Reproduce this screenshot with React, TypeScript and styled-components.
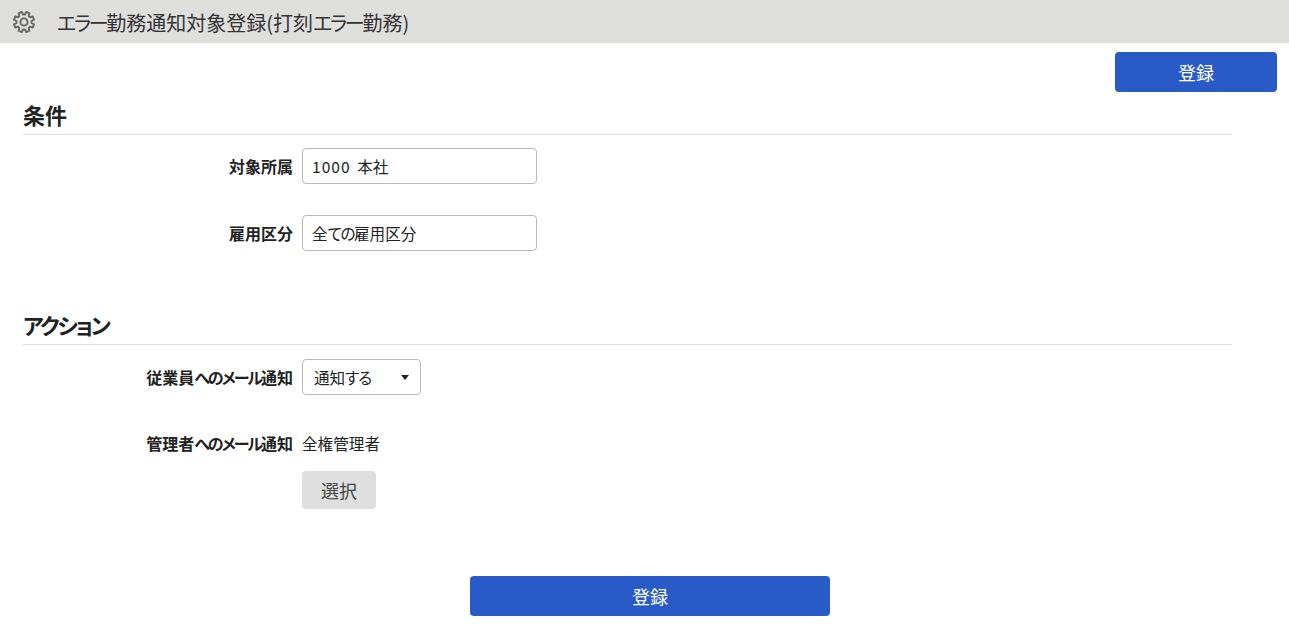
import React from 'react';
import styled, { createGlobalStyle } from 'styled-components';

const GlobalStyle = createGlobalStyle`
  html, body {
    margin: 0;
    padding: 0;
    background: #fff;
  }
  body {
    font-family: "Noto Sans CJK JP", "Noto Sans", sans-serif;
    font-size: 16px;
    font-feature-settings: "palt";
    color: #222;
  }
`;

const Header = styled.header`
  height: 43px;
  background-color: #dfdfde;
  display: flex;
  align-items: center;
  padding-left: 12px;
  color: #666;
`;

const Title = styled.h1`
  margin: 3px 0 0 21px;
  font-size: 20px;
  font-weight: 400;
  line-height: 1;
  color: #333;
`;

// the kana in the original font run much narrower than in Noto
const Kana = styled.span<{ $tight: number }>`
  letter-spacing: ${(p) => p.$tight}px;
`;

const Digits = styled.span`
  letter-spacing: 1px;
  margin-right: 6.5px;
`;

const TopBar = styled.div`
  display: flex;
  justify-content: flex-end;
  padding: 9px 12px 0 0;
`;

const SubmitButton = styled.button<{ $width: number }>`
  width: ${(p) => p.$width}px;
  height: 40px;
  padding: 0;
  border: 0;
  border-radius: 4px;
  background-color: #295bc8;
  color: #fff;
  font-family: inherit;
  font-size: 18px;
  font-feature-settings: inherit;
`;

const Section = styled.section`
  width: 1209px;
  margin-left: 23px;
`;

const SectionTitle = styled.h2<{ $top: number }>`
  margin: ${(p) => p.$top}px 0 0;
  height: 33px;
  line-height: 27px;
  font-size: 22px;
  font-weight: 700;
  color: #222;
  border-bottom: 1px solid #ddd;
`;

const Row = styled.div<{ $top: number }>`
  display: flex;
  align-items: center;
  margin-top: ${(p) => p.$top}px;
`;

const Label = styled.div`
  width: 270px;
  margin-right: 9px;
  text-align: right;
  font-size: 16px;
  line-height: 20px;
  font-weight: 700;
  color: #222;
`;

const TextBox = styled.div`
  box-sizing: border-box;
  width: 235px;
  height: 36px;
  display: flex;
  align-items: center;
  padding-left: 9px;
  border: 1px solid #b9b9b9;
  border-radius: 4px;
  font-size: 15.6px;
`;

const SelectBox = styled.div`
  box-sizing: border-box;
  width: 119px;
  height: 36px;
  display: flex;
  align-items: center;
  justify-content: space-between;
  padding: 0 11px;
  border: 1px solid #b9b9b9;
  border-radius: 4px;
  font-size: 15.6px;
`;

const Caret = styled.span`
  width: 0;
  height: 0;
  border-left: 4px solid transparent;
  border-right: 4px solid transparent;
  border-top: 5px solid #222;
`;

const Value = styled.div`
  font-size: 15.6px;
  line-height: 20px;
`;

const Indented = styled.div`
  margin: 18px 0 0 279px;
`;

const PickButton = styled.button`
  display: block;
  width: 74px;
  height: 38px;
  padding: 0;
  border: 0;
  border-radius: 4px;
  background-color: #dfdfdf;
  color: #444;
  font-family: inherit;
  font-size: 18px;
  font-feature-settings: inherit;
`;

const Footer = styled.div`
  display: flex;
  justify-content: center;
  width: 1300px;
  margin-top: 67px;
`;

// eight tooth cog outline, centred on 12,12
const cogPath = (() => {
  const pt = (r: number, deg: number) => {
    const a = (deg * Math.PI) / 180;
    return `${(12 + r * Math.cos(a)).toFixed(2)} ${(12 + r * Math.sin(a)).toFixed(2)}`;
  };
  const parts: string[] = [];
  for (let i = 0; i < 8; i++) {
    const c = i * 45 + 22.5;
    parts.push(pt(7.6, c - 15), pt(10.3, c - 10), pt(10.3, c + 10), pt(7.6, c + 15));
  }
  return `M${parts.join('L')}Z`;
})();

function CogIcon() {
  return (
    <svg width="24" height="24" viewBox="0 0 24 24" fill="none" stroke="currentColor" strokeWidth="1.9" strokeLinejoin="round">
      <path d={cogPath} />
      <circle cx="12" cy="12" r="3.6" />
    </svg>
  );
}

export default function App() {
  return (
    <>
      <GlobalStyle />
      <Header>
        <CogIcon />
        <Title>
          <Kana $tight={-2.3}>エラー</Kana>勤務通知対象登録(打刻
          <Kana $tight={-2.3}>エラー</Kana>勤務)
        </Title>
      </Header>
      <TopBar>
        <SubmitButton $width={162}>登録</SubmitButton>
      </TopBar>
      <Section>
        <SectionTitle $top={9}>条件</SectionTitle>
        <Row $top={13}>
          <Label>対象所属</Label>
          <TextBox>
            <Digits>1000</Digits>
            <span>本社</span>
          </TextBox>
        </Row>
        <Row $top={31}>
          <Label>雇用区分</Label>
          <TextBox>
            <span>
              全<Kana $tight={-1.5}>ての</Kana>雇用区分
            </span>
          </TextBox>
        </Row>
        <SectionTitle $top={60}>
          <Kana $tight={-2.4}>アクション</Kana>
        </SectionTitle>
        <Row $top={14}>
          <Label>
            従業員<Kana $tight={-2}>へのメール</Kana>通知
          </Label>
          <SelectBox>
            <span>
              通知<Kana $tight={-1}>する</Kana>
            </span>
            <Caret />
          </SelectBox>
        </Row>
        <Row $top={38}>
          <Label>
            管理者<Kana $tight={-2}>へのメール</Kana>通知
          </Label>
          <Value>全権管理者</Value>
        </Row>
        <Indented>
          <PickButton>選択</PickButton>
        </Indented>
      </Section>
      <Footer>
        <SubmitButton $width={360}>登録</SubmitButton>
      </Footer>
    </>
  );
}
